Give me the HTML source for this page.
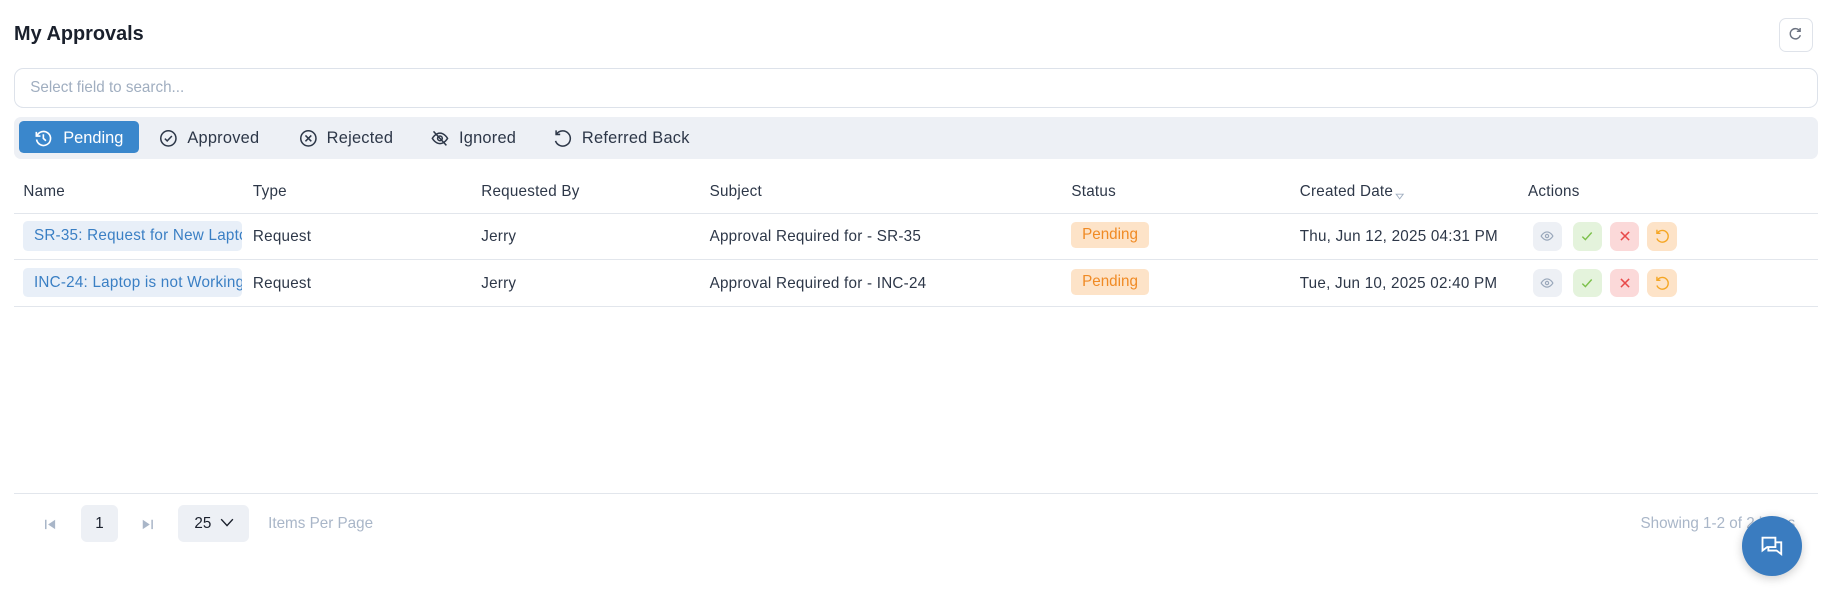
<!DOCTYPE html>
<html><head><meta charset="utf-8"><style>
html,body{margin:0;padding:0;background:#fff;overflow:hidden}
body{width:1836px;height:601px}
#w{width:1568px;height:513px;zoom:1.17092;position:relative;font-family:"Liberation Sans",sans-serif;color:#1f2937}
.a{position:absolute}
.t{font-size:13px;color:#2d3748;white-space:nowrap;letter-spacing:0.2px}
.h{font-size:13px;color:#2d3748;font-weight:500;letter-spacing:0.2px}
.tab{position:absolute;top:104px;height:28px;display:flex;align-items:center;font-size:14px;color:#2d3748;letter-spacing:0.2px}
.tab svg{margin-right:8px}
.line{position:absolute;left:12px;width:1541px;height:1px;background:#e2e6ec}
.chip{position:absolute;left:20px;width:187px;height:25px;background:#e8eff8;border-radius:4px;color:#3a7fc4;font-size:13px;line-height:26px;padding-left:9px;box-sizing:border-box;overflow:hidden;white-space:nowrap;letter-spacing:0.2px}
.badge{position:absolute;left:915px;width:66px;height:22px;background:#fde3c8;border-radius:4px;color:#f08a24;font-size:13px;line-height:23px;text-align:center}
.btn{position:absolute;width:25px;height:24px;border-radius:6px;display:flex;align-items:center;justify-content:center}
</style></head><body><div id="w">
<div class="a" style="left:12px;top:20px;font-size:17px;font-weight:600;color:#1a202c">My Approvals</div>
<div class="a" style="left:1519px;top:15px;width:29px;height:29px;border:1px solid #dfe3ea;border-radius:6px;box-sizing:border-box;display:flex;align-items:center;justify-content:center">
<svg width="14" height="14" viewBox="0 0 16 16" fill="none" stroke="#6b7280" stroke-width="1.4"><path d="M12.5 5A5 5 0 1 0 13 9"/><path d="M12.8 2v3.2H9.6"/></svg></div>
<div class="a" style="left:12px;top:58px;width:1541px;height:34px;border:1px solid #dde2ea;border-radius:8px;box-sizing:border-box;font-size:13px;color:#a0aec0;line-height:33px;padding-left:13px">Select field to search...</div>
<div class="a" style="left:12px;top:100px;width:1541px;height:36px;background:#edf0f5;border-radius:6px"></div>
<div class="a" style="left:16px;top:103px;width:103px;height:28px;background:#3a87cc;border-radius:4px;color:#fff;font-size:14px;display:flex;align-items:center;padding-left:13px;padding-top:2px;box-sizing:border-box">
<svg width="16" height="16" viewBox="0 0 16 16" fill="none" stroke="#fff" stroke-width="1.4" style="margin-right:9px"><path d="M2.5 6A6 6 0 1 1 2.2 9"/><path d="M2 2.5V6h3.5"/><path d="M8 4.5V8l2.2 2"/></svg>Pending</div>
<div class="tab" style="left:136px"><svg width="16" height="16" viewBox="0 0 16 16" fill="none" stroke="#2d3748" stroke-width="1.3"><circle cx="8" cy="8" r="6.5"/><path d="M5 8.2l2 2 4-4.2"/></svg>Approved</div>
<div class="tab" style="left:255px"><svg width="16" height="16" viewBox="0 0 16 16" fill="none" stroke="#2d3748" stroke-width="1.3"><circle cx="8" cy="8" r="6.5"/><path d="M5.5 5.5l5 5M10.5 5.5l-5 5"/></svg>Rejected</div>
<div class="tab" style="left:367px"><svg width="17" height="16" viewBox="0 0 17 16" fill="none" stroke="#2d3748" stroke-width="1.3"><path d="M2 8s2.5-4.5 6.5-4.5S15 8 15 8s-2.5 4.5-6.5 4.5S2 8 2 8z"/><circle cx="8.5" cy="8" r="2"/><path d="M3 2l11 12"/></svg>Ignored</div>
<div class="tab" style="left:471px"><svg width="18" height="18" viewBox="0 0 18 18" fill="none" stroke="#2d3748" stroke-width="1.3"><path d="M4 5A6.5 6.5 0 1 1 3 11"/><path d="M3.5 2v3.5H7"/></svg>Referred Back</div>
<div class="a h" style="left:20px;top:156px">Name</div>
<div class="a h" style="left:216px;top:156px">Type</div>
<div class="a h" style="left:411px;top:156px">Requested By</div>
<div class="a h" style="left:606px;top:156px">Subject</div>
<div class="a h" style="left:915px;top:156px">Status</div>
<div class="a h" style="left:1110px;top:156px">Created Date<svg width="8" height="6" viewBox="0 0 8 6" style="margin-left:2px;vertical-align:-4px"><path d="M1 1h6L4 5z" fill="none" stroke="#a0aec0" stroke-width="0.8"/></svg></div>
<div class="a h" style="left:1305px;top:156px">Actions</div>
<div class="line" style="top:182px"></div>
<div class="line" style="top:221px"></div>
<div class="line" style="top:261px"></div>
<div class="line" style="top:421px"></div>
<div class="chip" style="top:189px">SR-35: Request for New Laptop</div>
<div class="a t" style="left:216px;top:195px">Request</div>
<div class="a t" style="left:411px;top:195px">Jerry</div>
<div class="a t" style="left:606px;top:195px">Approval Required for - SR-35</div>
<div class="badge" style="top:190px">Pending</div>
<div class="a t" style="left:1110px;top:195px">Thu, Jun 12, 2025 04:31 PM</div>
<div class="chip" style="top:229px">INC-24: Laptop is not Working</div>
<div class="a t" style="left:216px;top:235px">Request</div>
<div class="a t" style="left:411px;top:235px">Jerry</div>
<div class="a t" style="left:606px;top:235px">Approval Required for - INC-24</div>
<div class="badge" style="top:230px">Pending</div>
<div class="a t" style="left:1110px;top:235px">Tue, Jun 10, 2025 02:40 PM</div>
<div class="btn" style="left:1309px;top:190px;background:#edf0f5"><svg width="12" height="12" viewBox="0 0 12 12" fill="none" stroke="#9aa8bb" stroke-width="1"><path d="M1 6s2-3.5 5-3.5S11 6 11 6 9 9.5 6 9.5 1 6 1 6z"/><circle cx="6" cy="6" r="1.4"/></svg></div>
<div class="btn" style="left:1343px;top:190px;background:#e4f3dc"><svg width="12" height="12" viewBox="0 0 12 12" fill="none" stroke="#7cc04b" stroke-width="1.2"><path d="M2 6.5l2.6 2.6L10 3"/></svg></div>
<div class="btn" style="left:1375px;top:190px;background:#fbd9d9"><svg width="12" height="12" viewBox="0 0 12 12" fill="none" stroke="#e84a4a" stroke-width="1.3"><path d="M2.5 2.5l7 7M9.5 2.5l-7 7"/></svg></div>
<div class="btn" style="left:1407px;top:190px;background:#fde3c8"><svg width="14" height="14" viewBox="0 0 14 14" fill="none" stroke="#f5a623" stroke-width="1.2"><path d="M3.2 4A5 5 0 1 1 2.5 9"/><path d="M2.5 1.5v3h3"/></svg></div>
<div class="btn" style="left:1309px;top:230px;background:#edf0f5"><svg width="12" height="12" viewBox="0 0 12 12" fill="none" stroke="#9aa8bb" stroke-width="1"><path d="M1 6s2-3.5 5-3.5S11 6 11 6 9 9.5 6 9.5 1 6 1 6z"/><circle cx="6" cy="6" r="1.4"/></svg></div>
<div class="btn" style="left:1343px;top:230px;background:#e4f3dc"><svg width="12" height="12" viewBox="0 0 12 12" fill="none" stroke="#7cc04b" stroke-width="1.2"><path d="M2 6.5l2.6 2.6L10 3"/></svg></div>
<div class="btn" style="left:1375px;top:230px;background:#fbd9d9"><svg width="12" height="12" viewBox="0 0 12 12" fill="none" stroke="#e84a4a" stroke-width="1.3"><path d="M2.5 2.5l7 7M9.5 2.5l-7 7"/></svg></div>
<div class="btn" style="left:1407px;top:230px;background:#fde3c8"><svg width="14" height="14" viewBox="0 0 14 14" fill="none" stroke="#f5a623" stroke-width="1.2"><path d="M3.2 4A5 5 0 1 1 2.5 9"/><path d="M2.5 1.5v3h3"/></svg></div>
<svg class="a" style="left:38px;top:442px" width="11" height="11" viewBox="0 0 11 11"><path d="M1.5 1.5v8" stroke="#a9b6c8" stroke-width="1.3"/><path d="M9.5 1.5L3.5 5.5l6 4z" fill="#a9b6c8"/></svg>
<div class="a" style="left:69px;top:431px;width:32px;height:32px;background:#edf0f5;border-radius:5px;font-size:13px;line-height:33px;text-align:center;color:#1a202c">1</div>
<svg class="a" style="left:120px;top:442px" width="11" height="11" viewBox="0 0 11 11"><path d="M9.5 1.5v8" stroke="#a9b6c8" stroke-width="1.3"/><path d="M1.5 1.5l6 4-6 4z" fill="#a9b6c8"/></svg>
<div class="a" style="left:152px;top:431px;width:61px;height:32px;background:#edf0f5;border-radius:5px;font-size:13px;line-height:33px;color:#1a202c;padding-left:14px;box-sizing:border-box">25 <svg width="12" height="8" viewBox="0 0 12 8" style="margin-left:4px"><path d="M1 1l5 5.5L11 1" fill="none" stroke="#1a202c" stroke-width="1.2"/></svg></div>
<div class="a" style="left:229px;top:440px;font-size:13px;color:#a9b6c8">Items Per Page</div>
<div class="a" style="left:1401px;top:440px;font-size:13px;color:#a9b6c8">Showing 1-2 of 2 items</div>
<div class="a" style="left:1488px;top:441px;width:51px;height:51px;border-radius:50%;background:#3a7cc0;box-shadow:0 2px 8px rgba(0,0,0,.2);display:flex;align-items:center;justify-content:center">
<svg width="22" height="22" viewBox="0 0 22 22" fill="none" stroke="#fff" stroke-width="1.6"><path d="M3 4h11v8H7l-4 3z"/><path d="M8 12v3h7l4 3V8h-5"/></svg></div>
</div></body></html>
